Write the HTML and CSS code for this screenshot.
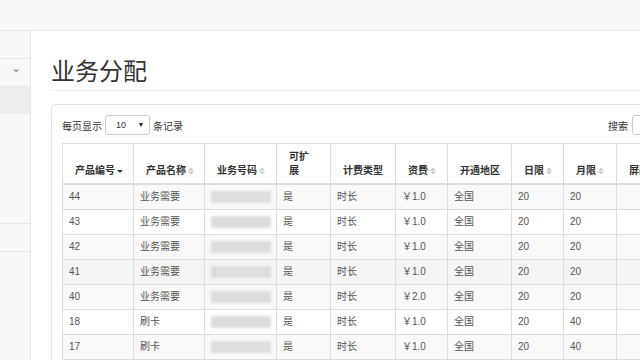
FILE: index.html
```html
<!DOCTYPE html>
<html lang="zh-CN">
<head>
  <meta charset="UTF-8" />
  <title>业务分配</title>
  <link rel="stylesheet" href="styles.css">
</head>
<body>

<div class="topbar"></div>

<div class="layout">
  <!-- 侧边菜单 -->
  <div class="sidebar">
    <div class="side-item"></div>
    <div class="side-item"><span class="chev">&#8964;</span></div>
    <div class="side-item active"></div>
    <div class="side-item tall"></div>
    <div class="side-item"></div>
  </div>

  <div class="main">
    <h1 class="page-header">业务分配</h1>

    <div class="panel">
      <div class="controls">
        <label>每页显示
          <span class="select">10 <i class="caret"></i></span>
          条记录</label>
        <label class="search">搜索 <span class="search-input"></span></label>
      </div>

      <table class="grid">
        <thead>
          <tr>
            <th class="c1">产品编号<svg class="sort" viewBox="0 0 6 8"><path d="M0 3h6L3 6z" fill="#333"/></svg></th>
            <th class="c2">产品名称<svg class="sort" viewBox="0 0 6 8"><path d="M0 3.5h6L3 0.5zM0 4.5h6L3 7.5z" fill="#c8c8c8"/></svg></th>
            <th class="c3">业务号码<svg class="sort" viewBox="0 0 6 8"><path d="M0 3.5h6L3 0.5zM0 4.5h6L3 7.5z" fill="#c8c8c8"/></svg></th>
            <th class="c4">可扩<br>展</th>
            <th class="c5">计费类型</th>
            <th class="c6">资费<svg class="sort" viewBox="0 0 6 8"><path d="M0 3.5h6L3 0.5zM0 4.5h6L3 7.5z" fill="#c8c8c8"/></svg></th>
            <th class="c7">开通地区</th>
            <th class="c8">日限<svg class="sort" viewBox="0 0 6 8"><path d="M0 3.5h6L3 0.5zM0 4.5h6L3 7.5z" fill="#c8c8c8"/></svg></th>
            <th class="c9">月限<svg class="sort" viewBox="0 0 6 8"><path d="M0 3.5h6L3 0.5zM0 4.5h6L3 7.5z" fill="#c8c8c8"/></svg></th>
            <th class="c10">屏蔽地区</th>
          </tr>
        </thead>
        <tbody>
          <tr><td>44</td><td>业务需要</td><td><span class="blur"></span></td><td>是</td><td>时长</td><td>￥1.0</td><td>全国</td><td>20</td><td>20</td><td></td></tr>
          <tr><td>43</td><td>业务需要</td><td><span class="blur"></span></td><td>是</td><td>时长</td><td>￥1.0</td><td>全国</td><td>20</td><td>20</td><td></td></tr>
          <tr><td>42</td><td>业务需要</td><td><span class="blur"></span></td><td>是</td><td>时长</td><td>￥1.0</td><td>全国</td><td>20</td><td>20</td><td></td></tr>
          <tr class="hover"><td>41</td><td>业务需要</td><td><span class="blur"></span></td><td>是</td><td>时长</td><td>￥1.0</td><td>全国</td><td>20</td><td>20</td><td></td></tr>
          <tr><td>40</td><td>业务需要</td><td><span class="blur"></span></td><td>是</td><td>时长</td><td>￥2.0</td><td>全国</td><td>20</td><td>20</td><td></td></tr>
          <tr><td>18</td><td>刷卡</td><td><span class="blur"></span></td><td>是</td><td>时长</td><td>￥1.0</td><td>全国</td><td>20</td><td>40</td><td></td></tr>
          <tr><td>17</td><td>刷卡</td><td><span class="blur"></span></td><td>是</td><td>时长</td><td>￥1.0</td><td>全国</td><td>20</td><td>40</td><td></td></tr>
        </tbody>
      </table>
    </div>
  </div>
</div>

</body>
</html>
```

FILE: styles.css
```css
body {
  margin: 0;
  font-family: 'Liberation Sans', 'Noto Sans CJK SC', sans-serif;
  font-size: 10px;
  color: #333;
  background: #fff;
  overflow: hidden;
  width: 640px;
  height: 360px;
}

.topbar {
  height: 30px;
  background: #f8f8f8;
  border-bottom: 1px solid #e7e7e7;
}

.layout {
  display: flex;
}

.sidebar {
  width: 30px;
  flex-shrink: 0;
  background: #f8f8f8;
  border-right: 1px solid #e7e7e7;
  height: 329px;
}

.side-item {
  height: 27px;
  border-bottom: 1px solid #e7e7e7;
  position: relative;
}

.side-item.active {
  background: #eee;
  border-bottom: none;
}

.side-item.tall {
  height: 109px;
}

.chev {
  position: absolute;
  left: 11px;
  top: 2px;
  font-size: 12px;
  color: #6f8fb0;
}

.main {
  padding: 0 0 0 20px;
  flex-shrink: 0;
}

.page-header {
  margin: 26px 0 13px;
  padding-bottom: 7px;
  border-bottom: 1px solid #eee;
  font-family: 'Noto Sans CJK SC', sans-serif;
  font-size: 24px;
  font-weight: 400;
  line-height: 26px;
  color: #333;
  width: 700px;
}

.panel {
  border: 1px solid #e3e3e3;
  border-radius: 4px;
  padding: 10px;
  width: 680px;
}

.controls {
  display: flex;
  justify-content: space-between;
  align-items: center;
  height: 20px;
  margin-bottom: 8px;
  font-family: 'Noto Sans CJK SC', sans-serif;
}

.controls label {
  display: flex;
  align-items: center;
  gap: 3px;
}

.select {
  display: inline-flex;
  align-items: center;
  justify-content: space-between;
  box-sizing: border-box;
  width: 45px;
  height: 20px;
  padding: 0 6px 0 10px;
  border: 1px solid #ccc;
  border-radius: 3px;
  font-family: 'Liberation Sans', sans-serif;
  font-size: 9px;
}

.caret {
  width: 0;
  height: 0;
  border-left: 2.5px solid transparent;
  border-right: 2.5px solid transparent;
  border-top: 4px solid #222;
}

.search {
  gap: 4px !important;
}

.search-input {
  display: inline-block;
  box-sizing: border-box;
  width: 110px;
  height: 20px;
  border: 1px solid #ccc;
  border-radius: 3px;
}

.grid {
  border-collapse: collapse;
  table-layout: fixed;
  width: 680px;
}

.grid th, .grid td {
  border: 1px solid #ddd;
  text-align: left;
}

.grid th {
  height: 28px;
  padding: 5px 4px 6px 12px;
  vertical-align: bottom;
  border-bottom: 2px solid #ddd;
  font-family: 'Noto Sans CJK SC', sans-serif;
  font-weight: 700;
  line-height: 14px;
  white-space: nowrap;
}

.grid td {
  height: 14px;
  padding: 5px 6px;
  line-height: 14px;
  color: #555;
  font-family: 'Liberation Sans', 'Noto Sans CJK SC', sans-serif;
}

.grid tbody tr:nth-child(odd) {
  background: #f9f9f9;
}

.grid tbody tr.hover {
  background: #f5f5f5;
}

.c1 { width: 54px; }
.c2 { width: 54px; }
.c3 { width: 55px; }
.c4 { width: 37px; }
.c5 { width: 48px; }
.c6 { width: 35px; }
.c7 { width: 47px; }
.c8 { width: 35px; }
.c9 { width: 36px; }

.sort {
  width: 6px;
  height: 8px;
  margin-left: 2px;
  vertical-align: -1px;
}

.blur {
  display: block;
  width: 60px;
  height: 12px;
  background: #dcdcdc;
  filter: blur(1.5px);
}
```
